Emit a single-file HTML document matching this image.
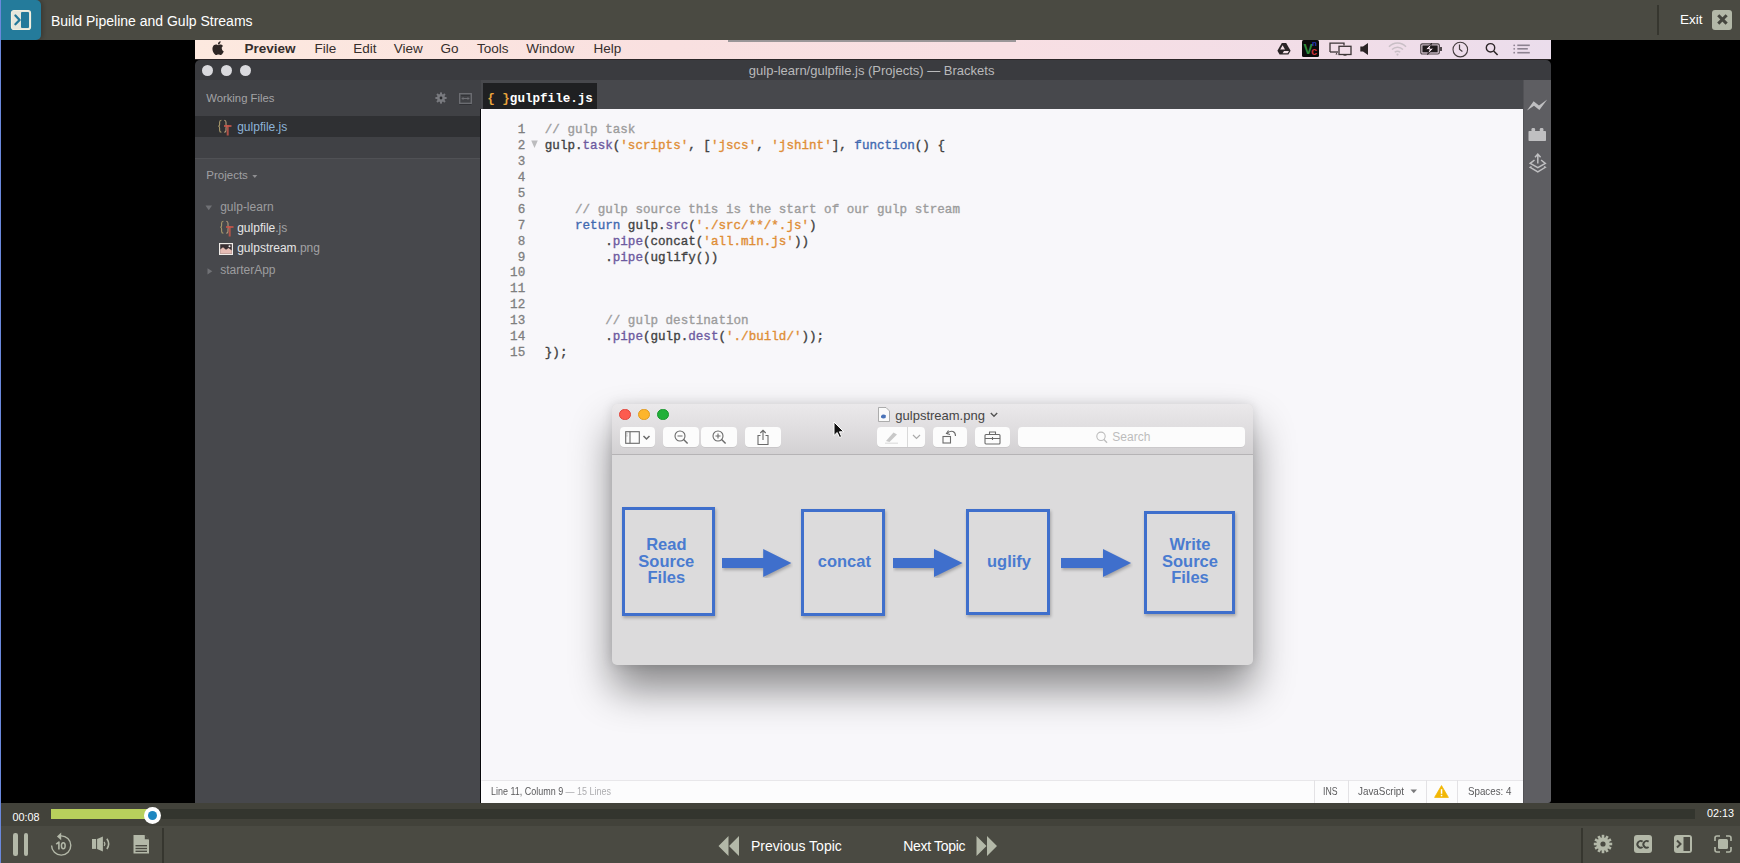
<!DOCTYPE html>
<html><head><meta charset="utf-8">
<style>
*{margin:0;padding:0;box-sizing:border-box}
html,body{width:1740px;height:863px;overflow:hidden;background:#000;font-family:"Liberation Sans",sans-serif}
.a{position:absolute}
.t{position:absolute;white-space:nowrap;line-height:1}
#top{left:0;top:0;width:1740px;height:40px;background:#4a4a42}
#logo{left:1px;top:0;width:40px;height:40px;background:#247b9b;border-radius:0 5px 5px 0;box-shadow:2px 0 4px rgba(0,0,0,0.22)}
#blue{left:0;top:0;width:1px;height:863px;background:#6a88dc;z-index:50}
#screen{left:195px;top:40px;width:1356px;height:763px;background:#000;overflow:hidden}
#menubar{left:0;top:0;width:1356px;height:20px;background:linear-gradient(90deg,#fde9df 0%,#f9e0e0 35%,#f8dfe3 60%,#f1dde8 85%,#ebddec 100%)}
#titlebar{left:0;top:20px;width:1356px;height:20px;background:#3a3b3f;border-radius:5px 5px 0 0}
#sidebar{left:0;top:40px;width:285px;height:723px;background:#47484c}
#tabs{left:286px;top:40px;width:1042px;height:29px;background:#47484c}
#editor{left:286px;top:69px;width:1042px;height:671px;background:#f8f7fa;border-left:1px solid #fdfdfe}
#edline{left:285px;top:69px;width:1px;height:694px;background:#08080b}
#status{left:286px;top:740px;width:1042px;height:23px;background:#fcfcfd;border-top:1px solid #e8e7ea;border-left:1px solid #fdfdfe}
#rtool{left:1328px;top:40px;width:28px;height:723px;background:#5e5e62;border-left:1px solid #525256;border-bottom-right-radius:3px}
#prog{left:0;top:803px;width:1740px;height:23px;background:#42423a}
#ctrl{left:0;top:826px;width:1740px;height:37px;background:#4a4a42}
.code{font-family:"Liberation Mono",monospace;font-size:12.6px;color:#444}
</style></head><body>
<div id="blue" class="a"></div>
<div id="top" class="a">
  <div id="logo" class="a"><svg class="a" style="left:9px;top:9px" width="22" height="22" viewBox="0 0 22 22"><rect x="1.5" y="1.5" width="19" height="19" rx="2.5" fill="#e6e7dc" stroke="#f2efdf" stroke-width="1.2"/><rect x="11" y="3" width="8" height="16" rx="1" fill="#23799a"/><path d="M5.4 6.5 L9.6 11 L5.4 15.3" fill="none" stroke="#23799a" stroke-width="2.3" stroke-linecap="round" stroke-linejoin="round"/></svg></div>
  <div class="t" style="left:51px;top:14px;font-size:14px;color:#fff">Build Pipeline and Gulp Streams</div>
  <div class="a" style="left:1657.2px;top:5px;width:1.5px;height:30px;background:#36362f"></div>
  <div class="t" style="left:1680px;top:12.6px;font-size:13.5px;color:#fff">Exit</div>
  <div class="a" style="left:1712px;top:10px;width:20px;height:20px;background:#b3b8a8;border-radius:3px"><svg class="a" style="left:0;top:0" width="20" height="20" viewBox="0 0 20 20"><path d="M7.3 6.3 L13.6 12.6 M13.6 6.3 L7.3 12.6" stroke="#45463f" stroke-width="3" stroke-linecap="square"/></svg></div>
</div>
<div id="screen" class="a">
  <div id="menubar" class="a">
  <div class="a" style="left:533px;top:0;width:288px;height:1.5px;background:#9a9698"></div>
  <svg class="a" style="left:17px;top:1px" width="13" height="14" viewBox="0 0 13 14"><path d="M9.6 7.4c0-1.6 1.3-2.4 1.4-2.5-.8-1.1-2-1.3-2.400-1.300-1-.1-2 .6-2.5.6-.5 0-1.300-.6-2.200-.6C2.700 3.600 1.600 4.300 1 5.400c-1.200 2.100-.3 5.200.9 6.900.6.800 1.300 1.800 2.200 1.700.9 0 1.200-.6 2.300-.6 1.100 0 1.400.6 2.300.6.900 0 1.500-.9 2.100-1.700.7-1 .9-1.900 1-2-.1 0-1.900-.7-1.900-2.900zM7.900 2.400c.5-.6.800-1.400.7-2.200-.7 0-1.500.5-2 1.100-.4.500-.8 1.300-.7 2.100.8.100 1.500-.4 2-1z" fill="#2e2624"/></svg>
  <div class="t" style="left:49.5px;top:2px;font-size:13.5px;font-weight:bold;color:#352e2c">Preview</div><div class="t" style="left:119.4px;top:2px;font-size:13.5px;font-weight:normal;color:#352e2c">File</div><div class="t" style="left:158.2px;top:2px;font-size:13.5px;font-weight:normal;color:#352e2c">Edit</div><div class="t" style="left:198.8px;top:2px;font-size:13.5px;font-weight:normal;color:#352e2c">View</div><div class="t" style="left:245.5px;top:2px;font-size:13.5px;font-weight:normal;color:#352e2c">Go</div><div class="t" style="left:281.9px;top:2px;font-size:13.5px;font-weight:normal;color:#352e2c">Tools</div><div class="t" style="left:331.2px;top:2px;font-size:13.5px;font-weight:normal;color:#352e2c">Window</div><div class="t" style="left:398.5px;top:2px;font-size:13.5px;font-weight:normal;color:#352e2c">Help</div>
  <svg class="a" style="left:1082.0px;top:2px" width="14" height="14" viewBox="0 0 14 14"><path d="M4.8 1 H9.2 L13.6 8.8 L11.4 12.6 H2.6 L0.4 8.8 Z" fill="#2a2426"/><path d="M5.6 3.2 L8 7.4 H3.2 Z M7 8.9 H12 L10.6 11.2 H5.6 Z" fill="#f4dfe6"/></svg>
  <div class="a" style="left:1107.0px;top:0px;width:17px;height:17px;background:#0b0b0b;border-radius:1.5px;overflow:hidden"><div class="t" style="left:1.5px;top:1.5px;font-size:14px;font-weight:bold;color:#2e8b3a">V</div><div class="t" style="left:10px;top:0px;font-size:8px;font-weight:bold;color:#2838b8">n</div><div class="t" style="left:9px;top:6px;font-size:11px;font-weight:bold;color:#c8303a">c</div></div>
  <svg class="a" style="left:1134.0px;top:2px" width="23" height="14" viewBox="0 0 23 14"><path d="M1 10 V1.2 H15 V3.5" fill="none" stroke="#3d3537" stroke-width="1.3"/><path d="M1 10 H9" fill="none" stroke="#3d3537" stroke-width="1.3"/><path d="M6.5 12.6 L7.5 10.5 L8.5 12.6 Z" fill="#3d3537"/><rect x="10" y="4.3" width="12" height="8.2" fill="none" stroke="#3d3537" stroke-width="1.3"/><rect x="14.5" y="12.4" width="3" height="1.3" fill="#3d3537"/></svg>
  <svg class="a" style="left:1165.0px;top:3px" width="9" height="12" viewBox="0 0 9 12"><path d="M0.3 3.6 H3 L8 0 V12 L3 8.4 H0.3 Z" fill="#2b2426"/></svg>
  <svg class="a" style="left:1193.0px;top:2px" width="19" height="14" viewBox="0 0 19 14"><g fill="none" stroke="#c9bfc6" stroke-width="1.5"><path d="M1 4.8 A11.5 11.5 0 0 1 18 4.8"/><path d="M4 7.6 A7.6 7.6 0 0 1 15 7.6"/><path d="M6.8 10.3 A3.8 3.8 0 0 1 12.2 10.3"/></g><circle cx="9.5" cy="12.6" r="1.1" fill="#c9bfc6"/></svg>
  <svg class="a" style="left:1225.0px;top:3px" width="23" height="12" viewBox="0 0 23 12"><rect x="0.8" y="0.8" width="18.5" height="10.2" rx="1.5" fill="none" stroke="#4a4144" stroke-width="1.2"/><rect x="2.4" y="2.4" width="15.3" height="7" fill="#1f1a1c"/><path d="M11.6 0.2 L5.4 6.6 H9.2 L7.6 11.6 L13.8 5.2 H10 Z" fill="#f2e2ea" stroke="#1f1a1c" stroke-width="0.9" stroke-linejoin="round"/><rect x="20.2" y="4" width="1.6" height="4" fill="#2a2426"/></svg>
  <svg class="a" style="left:1257.0px;top:1px" width="17" height="17" viewBox="0 0 17 17"><circle cx="8.3" cy="8.6" r="7.3" fill="none" stroke="#443c3e" stroke-width="1.1"/><path d="M7.5 3.4 V8.2 L10.4 10.4" fill="none" stroke="#443c3e" stroke-width="1.2"/></svg>
  <svg class="a" style="left:1290.0px;top:2px" width="14" height="14" viewBox="0 0 14 14"><circle cx="5.5" cy="5.8" r="4.2" fill="none" stroke="#2d2628" stroke-width="1.4"/><path d="M8.6 9 L12.6 13" stroke="#2d2628" stroke-width="1.6"/></svg>
  <svg class="a" style="left:1318.0px;top:4px" width="18" height="11" viewBox="0 0 18 11"><g fill="#8c8290"><circle cx="1.2" cy="1.3" r="0.9"/><circle cx="1.2" cy="4.8" r="0.9"/><circle cx="1.2" cy="8.7" r="0.9"/><rect x="4.3" y="0.5" width="12.5" height="1.6"/><rect x="4.3" y="4" width="10.5" height="1.6"/><rect x="4.3" y="7.9" width="12.5" height="1.6"/></g></svg>
  <div class="a" style="left:0;top:19px;width:1356px;height:1px;background:#2c2628"></div>
</div>
  <div id="titlebar" class="a">
  <div class="a" style="left:7px;top:5px;width:11.2px;height:11.2px;border-radius:50%;background:#d9d9dd"></div>
  <div class="a" style="left:26px;top:5px;width:11.2px;height:11.2px;border-radius:50%;background:#d9d9dd"></div>
  <div class="a" style="left:44.8px;top:5px;width:11.2px;height:11.2px;border-radius:50%;background:#d9d9dd"></div>
  <div class="t" style="left:553.8px;top:3.5px;font-size:13px;color:#b9b9bb">gulp-learn/gulpfile.js (Projects) — Brackets</div>
  </div>
  <div id="sidebar" class="a">
  <div class="a" style="left:0;top:0;width:286px;height:78px;background:#404145"></div>
  <div class="a" style="left:0;top:36px;width:286px;height:20.5px;background:#2f3033"></div>
  <div class="a" style="left:0;top:78px;width:286px;height:1px;background:#505155"></div>
  <div class="t" style="left:11.2px;top:13.2px;font-size:11.3px;color:#a3a3a6">Working Files</div>
  <svg class="a" style="left:239.5px;top:11.8px" width="12" height="12" viewBox="-6 -6 12 12"><g fill="#797a7f"><circle r="3.9"/><rect x="-1" y="-5.6" width="2" height="2.6" transform="rotate(0)"/><rect x="-1" y="-5.6" width="2" height="2.6" transform="rotate(45)"/><rect x="-1" y="-5.6" width="2" height="2.6" transform="rotate(90)"/><rect x="-1" y="-5.6" width="2" height="2.6" transform="rotate(135)"/><rect x="-1" y="-5.6" width="2" height="2.6" transform="rotate(180)"/><rect x="-1" y="-5.6" width="2" height="2.6" transform="rotate(225)"/><rect x="-1" y="-5.6" width="2" height="2.6" transform="rotate(270)"/><rect x="-1" y="-5.6" width="2" height="2.6" transform="rotate(315)"/></g><circle r="1.4" fill="#2c2d30"/></svg>
  <svg class="a" style="left:264.0px;top:12.5px" width="13" height="12" viewBox="0 0 13 12"><rect x="0.7" y="0.7" width="11.6" height="9.6" fill="none" stroke="#6e6f74" stroke-width="1.3"/><rect x="2" y="2" width="9" height="1" fill="#333438"/><path d="M2.2 5.5 L4.5 3.9 V7.1 Z M10.8 5.5 L8.5 3.9 V7.1 Z" fill="#6e6f74"/><rect x="4" y="5" width="5" height="1" fill="#6e6f74"/><rect x="0.5" y="11.3" width="12" height="0.8" fill="#2a2b2e"/></svg>
  <svg class="a" style="left:23.0px;top:39.0px" width="15" height="18" viewBox="0 0 15 18"><g fill="none" stroke-width="1.1"><path d="M3.4 1.3 Q1.6 1.3 1.6 3.3 V5.6 Q1.6 7.3 0.3 7.3 Q1.6 7.3 1.6 9 V11.3 Q1.6 13.3 3.4 13.3" stroke="#a8986a"/><path d="M6.2 1.3 Q8 1.3 8 3.3 V5.6 Q8 7.3 9.3 7.3 Q8 7.3 8 9 V11.3 Q8 13.3 6.2 13.3" stroke="#b39c7c"/></g><rect x="6" y="6" width="7.5" height="2" fill="#c4564a" opacity="0.85"/><rect x="8.7" y="6" width="2" height="10.5" fill="#c4564a" opacity="0.85"/></svg>
  <div class="t" style="left:42.2px;top:40.8px;font-size:12px;color:#8db3d8">gulpfile.js</div>
  <div class="t" style="left:11.3px;top:89.6px;font-size:11.5px;color:#a0a0a3">Projects</div>
  <svg class="a" style="left:57.0px;top:94.0px" width="6" height="5" viewBox="0 0 6 5"><path d="M0.3 1 H5.3 L2.8 4 Z" fill="#8e8e91"/></svg>
  <svg class="a" style="left:10.0px;top:124.5px" width="8" height="6" viewBox="0 0 8 6"><path d="M0.5 0.5 H7 L3.75 5.3 Z" fill="#707175"/></svg>
  <div class="t" style="left:25.2px;top:121.1px;font-size:12px;color:#9d9d9f">gulp-learn</div>
  <svg class="a" style="left:24.5px;top:140.0px" width="15" height="18" viewBox="0 0 15 18"><g fill="none" stroke-width="1.1"><path d="M3.4 1.3 Q1.6 1.3 1.6 3.3 V5.6 Q1.6 7.3 0.3 7.3 Q1.6 7.3 1.6 9 V11.3 Q1.6 13.3 3.4 13.3" stroke="#a8986a"/><path d="M6.2 1.3 Q8 1.3 8 3.3 V5.6 Q8 7.3 9.3 7.3 Q8 7.3 8 9 V11.3 Q8 13.3 6.2 13.3" stroke="#b39c7c"/></g><rect x="6" y="6" width="7.5" height="2" fill="#c4564a" opacity="0.85"/><rect x="8.7" y="6" width="2" height="10.5" fill="#c4564a" opacity="0.85"/></svg>
  <div class="t" style="left:42.2px;top:141.8px;font-size:12px;color:#e6e6e6">gulpfile<span style="color:#a2a2a4">.js</span></div>
  <svg class="a" style="left:24.0px;top:163.0px" width="14" height="12" viewBox="0 0 14 12"><rect x="0" y="0" width="14" height="12" fill="#f0ece8"/><rect x="1.2" y="1.2" width="11.6" height="9.6" fill="#3a3033"/><path d="M1.2 10.8 V6.5 L4 4.2 L7 6.8 L9.5 5 L12.8 7.5 V10.8 Z" fill="#e6bcb4"/><circle cx="10.5" cy="3.3" r="1" fill="#f4f0f0"/></svg>
  <div class="t" style="left:42.2px;top:162.4px;font-size:12px;color:#e6e6e6">gulpstream<span style="color:#a2a2a4">.png</span></div>
  <svg class="a" style="left:11.5px;top:187.5px" width="6" height="7" viewBox="0 0 6 7"><path d="M0.5 0.3 L5.3 3.3 L0.5 6.4 Z" fill="#707175"/></svg>
  <div class="t" style="left:25.2px;top:184.1px;font-size:12px;color:#9d9d9f">starterApp</div>
</div>
  <div id="tabs" class="a"></div>
  <div id="edline" class="a"></div>
  <div id="editor" class="a">
  <pre class="a" style="left:13.2px;top:14px;width:30px;text-align:right;font-family:'Liberation Mono',monospace;font-size:12.58px;line-height:15.93px;color:#7e7e7e;-webkit-text-stroke:0.3px">1
2
3
4
5
6
7
8
9
10
11
12
13
14
15</pre>
  <svg class="a" style="left:49px;top:31px" width="8" height="9" viewBox="0 0 8 9"><path d="M0.2 0.5 H6.8 L3.5 8 Z" fill="#bcbcbe"/></svg>
  <pre class="a" style="left:62.8px;top:14px;font-family:'Liberation Mono',monospace;font-size:12.58px;line-height:15.93px;color:#424242;-webkit-text-stroke:0.35px"><span style="color:#9c9c9c">// gulp task</span>
gulp.<span style="color:#6d5aa0">task</span>(<span style="color:#df8e36">'scripts'</span>, [<span style="color:#df8e36">'jscs'</span>, <span style="color:#df8e36">'jshint'</span>], <span style="color:#4169b0">function</span>() {



    <span style="color:#9c9c9c">// gulp source this is the start of our gulp stream</span>
    <span style="color:#4169b0">return</span> gulp.<span style="color:#6d5aa0">src</span>(<span style="color:#df8e36">'./src/**/*.js'</span>)
        .<span style="color:#6d5aa0">pipe</span>(concat(<span style="color:#df8e36">'all.min.js'</span>))
        .<span style="color:#6d5aa0">pipe</span>(uglify())



        <span style="color:#9c9c9c">// gulp destination</span>
        .<span style="color:#6d5aa0">pipe</span>(gulp.<span style="color:#6d5aa0">dest</span>(<span style="color:#df8e36">'./build/'</span>));
});</pre>
</div>
<div class="a" style="left:288px;top:43px;width:114px;height:26px;background:#1f2022"><div class="t" style="left:4.2px;top:9.6px;font-family:'Liberation Mono',monospace;font-size:12.58px;font-weight:bold;color:#fff"><span style="color:#e9a43c">{ }</span>gulpfile.js</div></div>
  <div id="status" class="a">
  <div class="t" style="left:9.0px;top:4.91px;font-size:10.5px;color:#5a5a5c;transform:scaleX(0.854);transform-origin:0 0">Line 11, Column 9 <span style="color:#adadb0">— 15 Lines</span></div>
  <div class="a" style="left:831.8px;top:-1px;width:1px;height:23px;background:#e3e2e5"></div><div class="a" style="left:865.6px;top:-1px;width:1px;height:23px;background:#e3e2e5"></div><div class="a" style="left:943.6px;top:-1px;width:1px;height:23px;background:#e3e2e5"></div><div class="a" style="left:975.0px;top:-1px;width:1px;height:23px;background:#e3e2e5"></div>
  <div class="t" style="left:840.8px;top:4.91px;font-size:10.5px;color:#5a5a5c;transform:scaleX(0.83);transform-origin:0 0">INS</div>
  <div class="t" style="left:876.0px;top:4.91px;font-size:10.5px;color:#5a5a5c;transform:scaleX(0.94);transform-origin:0 0">JavaScript</div>
  <svg class="a" style="left:928.0px;top:8.0px" width="8" height="5" viewBox="0 0 8 5"><path d="M0.5 0.5 H7 L3.75 4.3 Z" fill="#7a7a7c"/></svg>
  <svg class="a" style="left:952.0px;top:4.0px" width="15" height="13" viewBox="0 0 15 13"><path d="M7.5 0.6 L14.4 12.4 H0.6 Z" fill="#f2b705" stroke="#f2b705" stroke-width="0.8" stroke-linejoin="round"/><rect x="6.8" y="4.2" width="1.5" height="4.6" fill="#fff"/><rect x="6.8" y="9.8" width="1.5" height="1.5" fill="#fff"/></svg>
  <div class="t" style="left:985.5px;top:4.91px;font-size:10.5px;color:#5a5a5c;transform:scaleX(0.93);transform-origin:0 0">Spaces: 4</div>
</div>
  <div id="rtool" class="a">
  <svg class="a" style="left:2.0px;top:19.0px" width="22" height="13" viewBox="0 0 22 13"><path d="M1 11.6 L7.6 2.2 L13 6.6 L21.2 0.6 L13.4 11 L8 6.8 Z" fill="#bfbfc1"/></svg>
  <svg class="a" style="left:4.0px;top:47.0px" width="19" height="15" viewBox="0 0 19 15"><rect x="0.5" y="4" width="17.5" height="10" rx="0.8" fill="#bfbfc1"/><rect x="3.5" y="1" width="3.6" height="4" rx="1.2" fill="#bfbfc1"/><rect x="11.8" y="1" width="3.6" height="4" rx="1.2" fill="#bfbfc1"/></svg>
  <svg class="a" style="left:4.5px;top:72.5px" width="18" height="21" viewBox="0 0 18 21"><g fill="none" stroke="#bfbfc1" stroke-width="1.5"><path d="M8.8 10.5 V1.5 M6 4.2 L8.8 1.2 L11.6 4.2"/><path d="M5.5 7 L1.3 10.3 L8.8 14.6 L16.3 10.3 L12.1 7"/><path d="M2.5 13.5 L1.3 14.3 L8.8 18.8 L16.3 14.3 L15.1 13.5"/></g></svg>
</div>
</div>
<div class="a" style="left:611.5px;top:403.5px;width:641px;height:261.5px;border-radius:5px;background:#dcdbdc;box-shadow:0 24px 40px rgba(0,0,0,0.45),0 0 12px rgba(0,0,0,0.12);overflow:hidden">
  <div class="a" style="left:0;top:0;width:641px;height:51px;background:linear-gradient(#ebe9eb,#d3d1d3);border-bottom:1px solid #b5b3b5"></div>
  <div class="a" style="left:7.7px;top:5.1px;width:11.5px;height:11.5px;border-radius:50%;background:#fd5b4f;border:0.5px solid #e0443a"></div>
  <div class="a" style="left:26.7px;top:5.1px;width:11.5px;height:11.5px;border-radius:50%;background:#fdb52c;border:0.5px solid #e09a20"></div>
  <div class="a" style="left:45.7px;top:5.1px;width:11.5px;height:11.5px;border-radius:50%;background:#22b03a;border:0.5px solid #1a962e"></div>
  <svg class="a" style="left:266.5px;top:3.5px" width="12" height="15" viewBox="0 0 12 15"><path d="M0.5 0.5 H8 L11.5 4 V14.5 H0.5 Z" fill="#fafafa" stroke="#9a9a9a" stroke-width="0.8"/><path d="M3 9 Q5 6.5 8 8.5 L7.5 11 Q5 12 3 10.5 Z" fill="#4a72b8"/></svg>
  <div class="t" style="left:283.8px;top:5.6px;font-size:13px;color:#454545">gulpstream.png</div>
  <svg class="a" style="left:378.5px;top:8.0px" width="8" height="6" viewBox="0 0 8 6"><path d="M0.8 1 L4 4.3 L7.2 1" fill="none" stroke="#555" stroke-width="1.4"/></svg>
  <div class="a" style="left:8.2px;top:23.5px;width:35.3px;height:20px;background:#fcfcfc;border-radius:4px;box-shadow:0 0.5px 0.5px rgba(0,0,0,0.12)"></div>
  <svg class="a" style="left:13.0px;top:27.0px" width="28" height="14" viewBox="0 0 28 14"><rect x="0.7" y="0.7" width="13.6" height="11.6" fill="none" stroke="#6a6a6a" stroke-width="1.1"/><path d="M5 0.7 V12.3" stroke="#6a6a6a" stroke-width="1.1"/><path d="M2 2.5 V3.3 M2 4.5 V5.3" stroke="#6a6a6a" stroke-width="0.8"/><path d="M18.5 5 L21.5 8 L24.5 5" fill="none" stroke="#6a6a6a" stroke-width="1.5"/></svg>
  <div class="a" style="left:51.1px;top:23.5px;width:36.8px;height:20px;background:#fcfcfc;border-radius:4px;box-shadow:0 0.5px 0.5px rgba(0,0,0,0.12)"></div><div class="a" style="left:89.0px;top:23.5px;width:36.8px;height:20px;background:#fcfcfc;border-radius:4px;box-shadow:0 0.5px 0.5px rgba(0,0,0,0.12)"></div>
  <svg class="a" style="left:62.5px;top:26.0px" width="15" height="15" viewBox="0 0 15 15"><circle cx="6" cy="6" r="5" fill="none" stroke="#6a6a6a" stroke-width="1.1"/><path d="M3.5 6 H8.5" stroke="#6a6a6a" stroke-width="1.1"/><path d="M9.6 9.6 L13.6 13.6" stroke="#6a6a6a" stroke-width="1.4"/></svg>
  <svg class="a" style="left:100.0px;top:26.0px" width="15" height="15" viewBox="0 0 15 15"><circle cx="6" cy="6" r="5" fill="none" stroke="#6a6a6a" stroke-width="1.1"/><path d="M3.5 6 H8.5 M6 3.5 V8.5" stroke="#6a6a6a" stroke-width="1.1"/><path d="M9.6 9.6 L13.6 13.6" stroke="#6a6a6a" stroke-width="1.4"/></svg>
  <div class="a" style="left:133.5px;top:23.5px;width:36.0px;height:20px;background:#fcfcfc;border-radius:4px;box-shadow:0 0.5px 0.5px rgba(0,0,0,0.12)"></div>
  <svg class="a" style="left:144.5px;top:25.0px" width="14" height="17" viewBox="0 0 14 17"><path d="M4.5 6.5 H2 V15.5 H12 V6.5 H9.5" fill="none" stroke="#6a6a6a" stroke-width="1.1"/><path d="M7 11 V1.5 M4.3 4 L7 1.3 L9.7 4" fill="none" stroke="#6a6a6a" stroke-width="1.1"/></svg>
  <svg class="a" style="left:221.0px;top:17.0px" width="13" height="18" viewBox="0 0 13 18"><path d="M1 1 V14.5 L4.2 11.5 L6.5 16.5 L8.6 15.6 L6.4 10.8 H10.8 Z" fill="#111" stroke="#fff" stroke-width="1"/></svg>
  <div class="a" style="left:265.6px;top:23.5px;width:47.9px;height:20px;background:#fcfcfc;border-radius:4px;box-shadow:0 0.5px 0.5px rgba(0,0,0,0.12)"></div>
  <div class="a" style="left:295.9px;top:23.5px;width:1px;height:20px;background:#d9d9d9"></div>
  <svg class="a" style="left:272.5px;top:26.5px" width="16" height="14" viewBox="0 0 16 14"><path d="M2 11 L9.5 2.5 L13 4.5 L5.5 12 Z" fill="#c8c8c8"/><path d="M1 13.2 H14" stroke="#d0d0d0" stroke-width="0.8"/></svg>
  <svg class="a" style="left:300.5px;top:30.5px" width="9" height="6" viewBox="0 0 9 6"><path d="M1 1 L4.5 4.5 L8 1" fill="none" stroke="#aaa" stroke-width="1.2"/></svg>
  <div class="a" style="left:321.3px;top:23.5px;width:33.8px;height:20px;background:#fcfcfc;border-radius:4px;box-shadow:0 0.5px 0.5px rgba(0,0,0,0.12)"></div>
  <svg class="a" style="left:330.0px;top:25.5px" width="16" height="16" viewBox="0 0 16 16"><rect x="1" y="7.5" width="7.5" height="6.5" fill="none" stroke="#6a6a6a" stroke-width="1.1"/><path d="M5 5 Q7 1.5 11 2.5 Q13.5 3.5 13.5 7" fill="none" stroke="#6a6a6a" stroke-width="1.1"/><path d="M6.5 1.5 L4.5 4.5 L8 5.5" fill="none" stroke="#6a6a6a" stroke-width="1.1"/></svg>
  <div class="a" style="left:363.1px;top:23.5px;width:35.4px;height:20px;background:#fcfcfc;border-radius:4px;box-shadow:0 0.5px 0.5px rgba(0,0,0,0.12)"></div>
  <svg class="a" style="left:372.5px;top:26.5px" width="17" height="15" viewBox="0 0 17 15"><rect x="1" y="4.5" width="15" height="9.5" rx="1" fill="none" stroke="#6a6a6a" stroke-width="1.1"/><path d="M5.5 4.5 V2 H11.5 V4.5 M1 8.5 H16 M8.5 7 V10" fill="none" stroke="#6a6a6a" stroke-width="1.1"/></svg>
  <div class="a" style="left:406.5px;top:23.5px;width:226.5px;height:20px;background:#fcfcfc;border-radius:4px;box-shadow:0 0.5px 0.5px rgba(0,0,0,0.1)"></div>
  <svg class="a" style="left:484.0px;top:27.0px" width="12" height="13" viewBox="0 0 12 13"><circle cx="5" cy="5.3" r="4.2" fill="none" stroke="#bdbdbd" stroke-width="1.1"/><path d="M8 8.5 L11 11.7" stroke="#bdbdbd" stroke-width="1.3"/></svg>
  <div class="t" style="left:500.8px;top:27.8px;font-size:12px;color:#bcbcbc">Search</div>
  <div class="a" style="left:10.9px;top:103.3px;width:92.3px;height:109.6px;border:3px solid #3f6fcc;box-shadow:1px 2px 3px rgba(0,0,0,0.25)"></div>
  <div class="a" style="left:189.3px;top:105.3px;width:83.9px;height:107.0px;border:3px solid #3f6fcc;box-shadow:1px 2px 3px rgba(0,0,0,0.25)"></div>
  <div class="a" style="left:354.7px;top:105.3px;width:83.6px;height:105.8px;border:3px solid #3f6fcc;box-shadow:1px 2px 3px rgba(0,0,0,0.25)"></div>
  <div class="a" style="left:532.1px;top:107.1px;width:91.7px;height:103.2px;border:3px solid #3f6fcc;box-shadow:1px 2px 3px rgba(0,0,0,0.25)"></div>
  <svg class="a" style="left:110.3px;top:144.3px" width="71.4" height="30" viewBox="0 0 71.4 30" style="overflow:visible"><path d="M0 10 H41.2 V1 L69.4 15 L41.2 29 V20 H0 Z" fill="#3f6fcc" style="filter:drop-shadow(1px 2px 1.5px rgba(0,0,0,0.25))"/></svg>
  <svg class="a" style="left:281.5px;top:144.3px" width="71.6" height="30" viewBox="0 0 71.6 30" style="overflow:visible"><path d="M0 10 H41.0 V1 L69.6 15 L41.0 29 V20 H0 Z" fill="#3f6fcc" style="filter:drop-shadow(1px 2px 1.5px rgba(0,0,0,0.25))"/></svg>
  <svg class="a" style="left:449.8px;top:144.3px" width="72.1" height="30" viewBox="0 0 72.1 30" style="overflow:visible"><path d="M0 10 H42.0 V1 L70.1 15 L42.0 29 V20 H0 Z" fill="#3f6fcc" style="filter:drop-shadow(1px 2px 1.5px rgba(0,0,0,0.25))"/></svg>
  <div class="t" style="left:-45.2px;top:132.6px;width:200px;text-align:center;font-size:16.5px;font-weight:bold;color:#4a7bd0">Read</div><div class="t" style="left:-45.2px;top:149.1px;width:200px;text-align:center;font-size:16.5px;font-weight:bold;color:#4a7bd0">Source</div><div class="t" style="left:-45.2px;top:165.6px;width:200px;text-align:center;font-size:16.5px;font-weight:bold;color:#4a7bd0">Files</div>
  <div class="t" style="left:132.8px;top:149.3px;width:200px;text-align:center;font-size:16.5px;font-weight:bold;color:#4a7bd0">concat</div>
  <div class="t" style="left:297.5px;top:149.3px;width:200px;text-align:center;font-size:16.5px;font-weight:bold;color:#4a7bd0">uglify</div>
  <div class="t" style="left:478.5px;top:132.6px;width:200px;text-align:center;font-size:16.5px;font-weight:bold;color:#4a7bd0">Write</div><div class="t" style="left:478.5px;top:149.1px;width:200px;text-align:center;font-size:16.5px;font-weight:bold;color:#4a7bd0">Source</div><div class="t" style="left:478.5px;top:165.6px;width:200px;text-align:center;font-size:16.5px;font-weight:bold;color:#4a7bd0">Files</div>
</div>
<div id="prog" class="a">
  <div class="t" style="left:12.5px;top:8.5px;font-size:10.8px;color:#fff">00:08</div>
  <div class="a" style="left:51px;top:6px;width:1644px;height:10px;background:#33352e"></div>
  <div class="a" style="left:51px;top:6px;width:101px;height:10px;background:#b8d05c"></div>
  <div class="a" style="left:144px;top:4px;width:17px;height:17px;border-radius:50%;background:#fff"></div>
  <div class="a" style="left:148px;top:8px;width:9px;height:9px;border-radius:50%;background:#1e87c0"></div>
  <div class="t" style="left:1707px;top:5.3px;font-size:10.8px;color:#fff">02:13</div>
</div>
<div id="ctrl" class="a">
  <div class="a" style="left:13.3px;top:6.7px;width:4.7px;height:22.9px;border-radius:2.2px;background:#b3b8a8"></div>
  <div class="a" style="left:23.8px;top:6.7px;width:4.5px;height:22.9px;border-radius:2.2px;background:#b3b8a8"></div>
  <svg class="a" style="left:45px;top:2px" width="30" height="30" viewBox="45 828 30 30"><path d="M51.6 845.5 A9.6 9.6 0 1 0 61 835.9" fill="none" stroke="#b3b8a8" stroke-width="1.4"/><path d="M61.2 832.6 V840.2 L56.9 836.4 Z" fill="#b3b8a8"/></svg><svg class="a" style="left:45px;top:2px" width="30" height="30" viewBox="45 828 30 30"><path d="M56.2 844.2 L58.9 842.1 V849.4" fill="none" stroke="#b3b8a8" stroke-width="1.6" stroke-linejoin="round"/><ellipse cx="63.3" cy="845.75" rx="1.85" ry="2.95" fill="none" stroke="#b3b8a8" stroke-width="1.5"/></svg>
  <svg class="a" style="left:90px;top:8px" width="24" height="20" viewBox="90 834 24 20"><rect x="92" y="839" width="4.1" height="9.9" fill="#b3b8a8"/><path d="M97.1 839 L102.9 836.6 V851.5 L97.1 849 Z" fill="#b3b8a8"/><path d="M104.2 841.8 Q105.6 843.9 104.2 846" fill="none" stroke="#b3b8a8" stroke-width="1.3"/><path d="M106.9 838.8 Q110.4 843.9 106.9 849" fill="none" stroke="#b3b8a8" stroke-width="1.6"/></svg>
  <svg class="a" style="left:133px;top:9px" width="17" height="19" viewBox="0 0 17 19"><path d="M0.5 0 H11.5 L16 4.5 V18.5 H0.5 Z" fill="#b3b8a8"/><path d="M11.8 0 V4.2 H16" fill="#4a4a42"/><rect x="2.5" y="10" width="11.5" height="1.4" fill="#4a4a42"/><rect x="2.5" y="12.8" width="11.5" height="1.4" fill="#4a4a42"/><rect x="2.5" y="15.6" width="11.5" height="1.4" fill="#4a4a42"/></svg>
  <div class="a" style="left:162px;top:2px;width:2px;height:35px;background:#36362f"></div>
  <svg class="a" style="left:718px;top:10px" width="22" height="20" viewBox="0 0 22 20"><path d="M10.5 0 V20 L0.5 10 Z M21 0 V20 L11 10 Z" fill="#b3b8a8"/></svg>
  <div class="t" style="left:751px;top:12.6px;font-size:14px;color:#fff">Previous Topic</div>
  <div class="t" style="left:903.2px;top:12.6px;font-size:14px;color:#fff;letter-spacing:-0.3px">Next Topic</div>
  <svg class="a" style="left:976px;top:10px" width="22" height="20" viewBox="0 0 22 20"><path d="M0.5 0 V20 L10.5 10 Z M11 0 V20 L21 10 Z" fill="#b3b8a8"/></svg>
  <div class="a" style="left:1581px;top:2px;width:2px;height:35px;background:#36362f"></div>
  <svg class="a" style="left:1593px;top:8px" width="20" height="20" viewBox="-10 -10 20 20"><g fill="#b3b8a8"><circle r="6.6"/><rect x="-1.3" y="-9.2" width="2.6" height="4" transform="rotate(0)"/><rect x="-1.3" y="-9.2" width="2.6" height="4" transform="rotate(30)"/><rect x="-1.3" y="-9.2" width="2.6" height="4" transform="rotate(60)"/><rect x="-1.3" y="-9.2" width="2.6" height="4" transform="rotate(90)"/><rect x="-1.3" y="-9.2" width="2.6" height="4" transform="rotate(120)"/><rect x="-1.3" y="-9.2" width="2.6" height="4" transform="rotate(150)"/><rect x="-1.3" y="-9.2" width="2.6" height="4" transform="rotate(180)"/><rect x="-1.3" y="-9.2" width="2.6" height="4" transform="rotate(210)"/><rect x="-1.3" y="-9.2" width="2.6" height="4" transform="rotate(240)"/><rect x="-1.3" y="-9.2" width="2.6" height="4" transform="rotate(270)"/><rect x="-1.3" y="-9.2" width="2.6" height="4" transform="rotate(300)"/><rect x="-1.3" y="-9.2" width="2.6" height="4" transform="rotate(330)"/></g><circle r="2.6" fill="#4a4a42"/></svg>
  <svg class="a" style="left:1634px;top:9px" width="18" height="18" viewBox="1634 835 18 18"><rect x="1634" y="835" width="18" height="18" rx="3" fill="#b3b8a8"/><path d="M1642.6 841.6 A3.3 3.3 0 1 0 1642.6 847" fill="none" stroke="#45463f" stroke-width="1.9"/><path d="M1648.6 841.6 A3.3 3.3 0 1 0 1648.6 847" fill="none" stroke="#45463f" stroke-width="1.9"/></svg>
  <svg class="a" style="left:1674px;top:9px" width="18" height="18" viewBox="0 0 18 18"><rect x="0" y="0" width="18" height="18" rx="3" fill="#b3b8a8"/><rect x="9.5" y="2" width="6.5" height="14" fill="#4a4a42"/><path d="M3 5.5 L6.5 9 L3 12.5" fill="none" stroke="#4a4a42" stroke-width="2"/></svg>
  <svg class="a" style="left:1714px;top:9px" width="18" height="18" viewBox="0 0 18 18"><path d="M6 1 H3 Q1 1 1 3 V6 M12 1 H15 Q17 1 17 3 V6 M1 12 V15 Q1 17 3 17 H6 M17 12 V15 Q17 17 15 17 H12" fill="none" stroke="#b3b8a8" stroke-width="1.6"/><rect x="4" y="4" width="10" height="10" rx="1.5" fill="#b3b8a8"/></svg>
</div>
</body></html>
